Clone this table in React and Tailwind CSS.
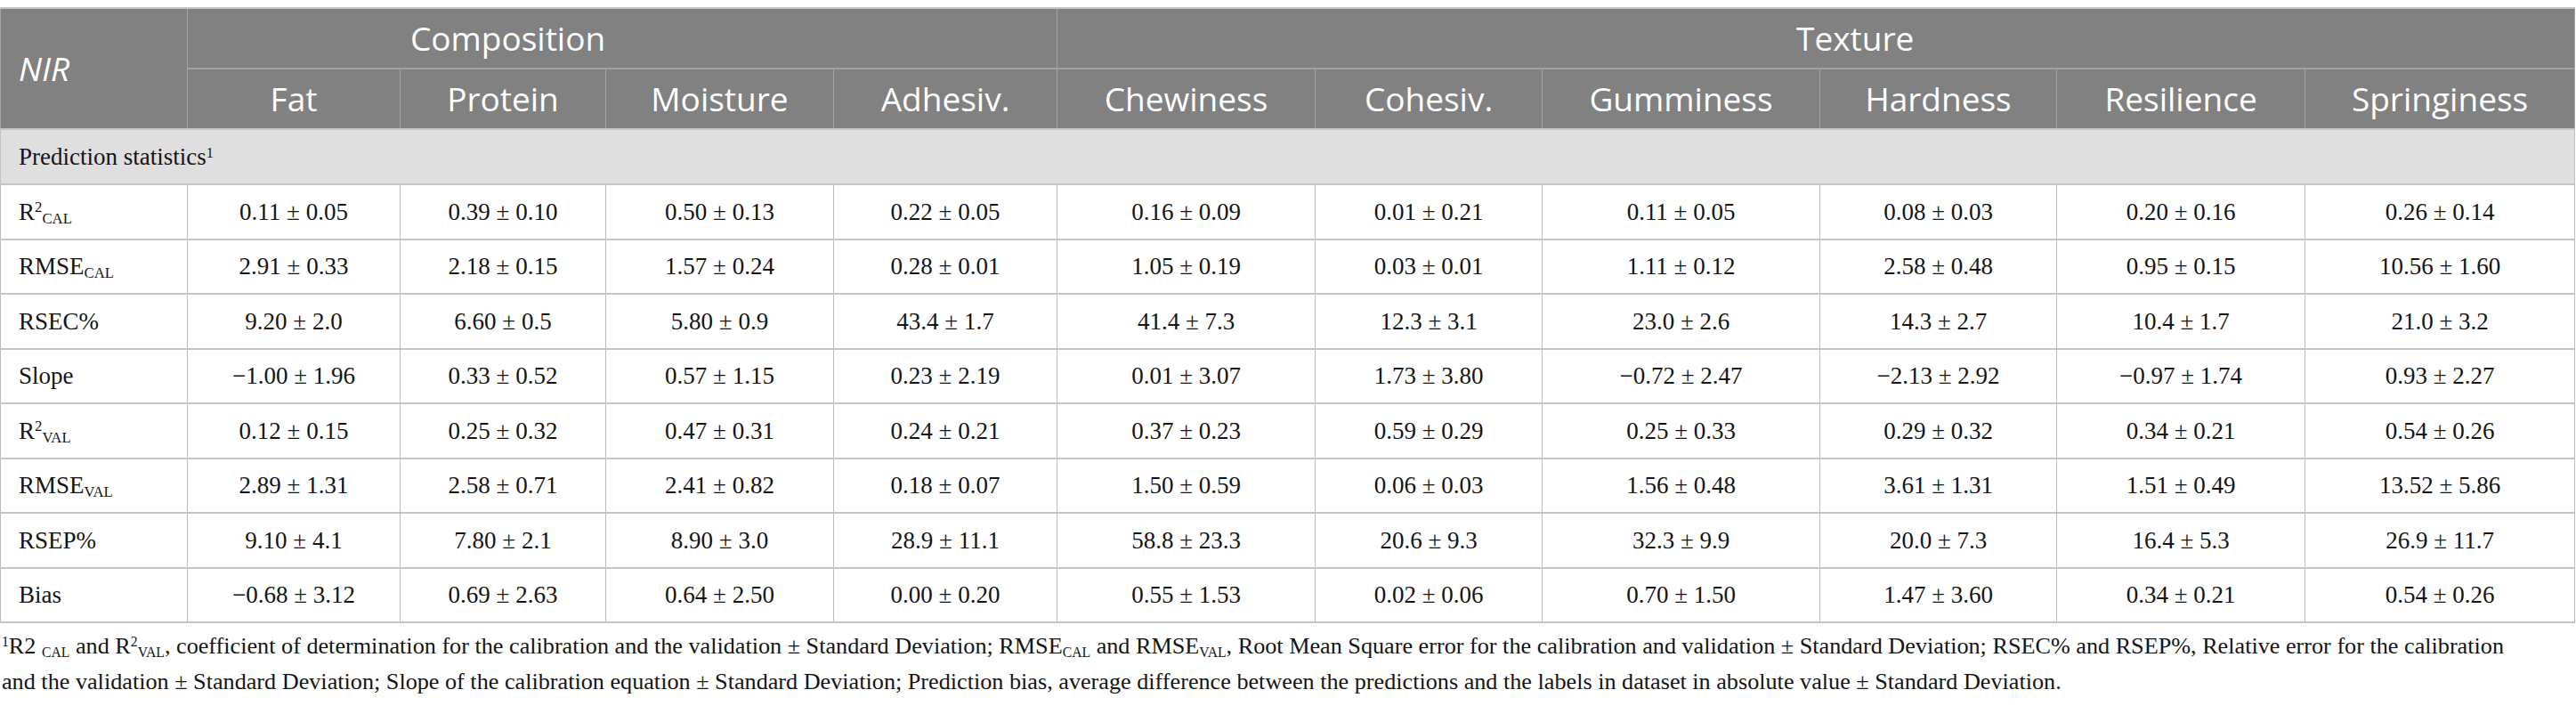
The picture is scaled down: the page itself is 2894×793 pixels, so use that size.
import React from "react";

const heads = ["Fat", "Protein", "Moisture", "Adhesiv.", "Chewiness", "Cohesiv.", "Gumminess", "Hardness", "Resilience", "Springiness"];

const colClasses = ["w-[210px]", "w-[239px]", "w-[231px]", "w-[256px]", "w-[251px]", "w-[290px]", "w-[255px]", "w-[312px]", "w-[266px]", "w-[279px]", "w-[303px]"];

const rows = [
  {
    label: (<>R<sup className="text-[0.62em]">2</sup><sub className="text-[0.62em]">CAL</sub></>),
    values: ["0.11 ± 0.05", "0.39 ± 0.10", "0.50 ± 0.13", "0.22 ± 0.05", "0.16 ± 0.09", "0.01 ± 0.21", "0.11 ± 0.05", "0.08 ± 0.03", "0.20 ± 0.16", "0.26 ± 0.14"],
  },
  {
    label: (<>RMSE<sub className="text-[0.62em]">CAL</sub></>),
    values: ["2.91 ± 0.33", "2.18 ± 0.15", "1.57 ± 0.24", "0.28 ± 0.01", "1.05 ± 0.19", "0.03 ± 0.01", "1.11 ± 0.12", "2.58 ± 0.48", "0.95 ± 0.15", "10.56 ± 1.60"],
  },
  {
    label: "RSEC%",
    values: ["9.20 ± 2.0", "6.60 ± 0.5", "5.80 ± 0.9", "43.4 ± 1.7", "41.4 ± 7.3", "12.3 ± 3.1", "23.0 ± 2.6", "14.3 ± 2.7", "10.4 ± 1.7", "21.0 ± 3.2"],
  },
  {
    label: "Slope",
    values: ["−1.00 ± 1.96", "0.33 ± 0.52", "0.57 ± 1.15", "0.23 ± 2.19", "0.01 ± 3.07", "1.73 ± 3.80", "−0.72 ± 2.47", "−2.13 ± 2.92", "−0.97 ± 1.74", "0.93 ± 2.27"],
  },
  {
    label: (<>R<sup className="text-[0.62em]">2</sup><sub className="text-[0.62em]">VAL</sub></>),
    values: ["0.12 ± 0.15", "0.25 ± 0.32", "0.47 ± 0.31", "0.24 ± 0.21", "0.37 ± 0.23", "0.59 ± 0.29", "0.25 ± 0.33", "0.29 ± 0.32", "0.34 ± 0.21", "0.54 ± 0.26"],
  },
  {
    label: (<>RMSE<sub className="text-[0.62em]">VAL</sub></>),
    values: ["2.89 ± 1.31", "2.58 ± 0.71", "2.41 ± 0.82", "0.18 ± 0.07", "1.50 ± 0.59", "0.06 ± 0.03", "1.56 ± 0.48", "3.61 ± 1.31", "1.51 ± 0.49", "13.52 ± 5.86"],
  },
  {
    label: "RSEP%",
    values: ["9.10 ± 4.1", "7.80 ± 2.1", "8.90 ± 3.0", "28.9 ± 11.1", "58.8 ± 23.3", "20.6 ± 9.3", "32.3 ± 9.9", "20.0 ± 7.3", "16.4 ± 5.3", "26.9 ± 11.7"],
  },
  {
    label: "Bias",
    values: ["−0.68 ± 3.12", "0.69 ± 2.63", "0.64 ± 2.50", "0.00 ± 0.20", "0.55 ± 1.53", "0.02 ± 0.06", "0.70 ± 1.50", "1.47 ± 3.60", "0.34 ± 0.21", "0.54 ± 0.26"],
  },
];

const App = () => {
  return (
    <div className="min-h-screen bg-white pt-2 text-[#141414]">
      <table className="w-[2893px] table-fixed border-collapse">
        <colgroup>
          {colClasses.map((c, i) => (
            <col key={i} className={c} />
          ))}
        </colgroup>
        <thead className="bg-[#808180] font-[family-name:'Open_Sans',sans-serif] text-[37px] font-normal text-white">
          <tr>
            <th
              rowSpan={2}
              className="border-t-2 border-l border-r border-[#a3a3a3] border-t-[#c4c4c4] px-5 text-left font-normal italic"
            >
              NIR
            </th>
            <th
              colSpan={4}
              className="h-[68px] border-t-2 border-b-2 border-x border-[#a3a3a3] border-t-[#c4c4c4] pl-[250px] text-left font-normal"
            >
              Composition
            </th>
            <th
              colSpan={6}
              className="h-[68px] border-t-2 border-b-2 border-x border-[#a3a3a3] border-t-[#c4c4c4] pl-[830px] text-left font-normal"
            >
              Texture
            </th>
          </tr>
          <tr>
            {heads.map((h) => (
              <th key={h} className="h-[68px] border-x border-[#a3a3a3] font-normal">
                {h}
              </th>
            ))}
          </tr>
        </thead>
        <tbody className="font-[family-name:'Liberation_Serif',serif] text-[27px]">
          <tr>
            <td
              colSpan={11}
              className="h-[62px] border-y-2 border-x border-[#c4c4c4] bg-[#e0dfe0] px-5 text-left"
            >
              Prediction statistics<sup className="text-[0.6em]">1</sup>
            </td>
          </tr>
          {rows.map((r, ri) => (
            <tr key={ri}>
              <td className="h-[61.5px] border-b-2 border-x border-[#c4c4c4] border-x-[#bdbdbd] px-5 text-left">
                {r.label}
              </td>
              {r.values.map((v, vi) => (
                <td
                  key={vi}
                  className="border-b-2 border-x border-[#c4c4c4] border-x-[#bdbdbd] text-center"
                >
                  {v}
                </td>
              ))}
            </tr>
          ))}
        </tbody>
      </table>
      <p className="mt-[6px] pl-[2px] font-[family-name:'Liberation_Serif',serif] text-[26.2px] leading-[40px]">
        <sup className="text-[0.6em]">1</sup>R2 <sub className="text-[0.6em]">CAL</sub> and R<sup className="text-[0.6em]">2</sup>
        <sub className="text-[0.6em]">VAL</sub>, coefficient of determination for the calibration and the validation ± Standard
        Deviation; RMSE<sub className="text-[0.6em]">CAL</sub> and RMSE<sub className="text-[0.6em]">VAL</sub>, Root Mean Square
        error for the calibration and validation ± Standard Deviation; RSEC% and RSEP%, Relative error for the calibration
        <br />
        and the validation ± Standard Deviation; Slope of the calibration equation ± Standard Deviation; Prediction bias,
        average difference between the predictions and the labels in dataset in absolute value ± Standard Deviation.
      </p>
    </div>
  );
};

export default App;
